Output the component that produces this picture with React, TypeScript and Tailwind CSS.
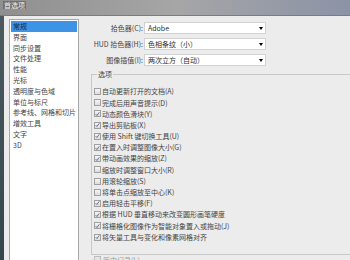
const CATEGORIES = [
  '常规',
  '界面',
  '同步设置',
  '文件处理',
  '性能',
  '光标',
  '透明度与色域',
  '单位与标尺',
  '参考线、网格和切片',
  '增效工具',
  '文字',
  '3D',
];

const PICKERS = [
  { label: '拾色器(C):', value: 'Adobe' },
  { label: 'HUD 拾色器(H):', value: '色相条纹（小）' },
  { label: '图像插值(I):', value: '两次立方（自动）' },
];

const OPTIONS: { text: string; checked: boolean }[] = [
  { text: '自动更新打开的文档(A)', checked: false },
  { text: '完成后用声音提示(D)', checked: false },
  { text: '动态颜色滑块(Y)', checked: true },
  { text: '导出剪贴板(X)', checked: true },
  { text: '使用 Shift 键切换工具(U)', checked: true },
  { text: '在置入时调整图像大小(G)', checked: true },
  { text: '带动画效果的缩放(Z)', checked: true },
  { text: '缩放时调整窗口大小(R)', checked: false },
  { text: '用滚轮缩放(S)', checked: false },
  { text: '将单击点缩放至中心(K)', checked: false },
  { text: '启用轻击平移(F)', checked: true },
  { text: '根据 HUD 垂直移动来改变圆形画笔硬度', checked: true },
  { text: '将栅格化图像作为智能对象置入或拖动(J)', checked: true },
  { text: '将矢量工具与变化和像素网格对齐', checked: true },
];

function Checkbox({ checked }: { checked: boolean }) {
  return (
    <span className="w-[7px] h-[7px] shrink-0 border border-[#a0a0a0] bg-gradient-to-b from-[#f6f6f6] to-[#dcdcdc] flex items-center justify-center">
      {checked && (
        <svg width="6" height="6" viewBox="0 0 6 6">
          <path d="M0.8 3.2 L2.3 4.8 L5.2 0.9" fill="none" stroke="#4a5a84" strokeWidth="1" />
        </svg>
      )}
    </span>
  );
}

export default function App() {
  return (
    <div className="w-[350px] h-[260px] overflow-hidden bg-[#ececec] flex flex-col font-['Noto_Sans_CJK_SC',sans-serif] text-[7px] text-[#444]">
      {/* Title bar */}
      <div className="h-[16px] shrink-0 border-b border-[#7c7c7c] bg-gradient-to-r from-[#8f8f8f] via-[#a6a6a6] to-[#8c93a6] flex items-start pl-[3px] pt-[1px]">
        <span className="px-[1px] leading-[8px] bg-[#707070] text-[#f2f2f2]">首选项</span>
      </div>

      <div className="flex flex-1 min-h-0">
        <div className="w-[4px] shrink-0 bg-gradient-to-b from-[#4c5a60] to-[#34474d]" />

        {/* Category list */}
        <div className="pl-[5px] pt-[3px] shrink-0">
          <div className="w-[70px] h-[260px] bg-white border border-[#a8a8a8] pt-[1px] px-[1px]">
            {CATEGORIES.map((name, i) => (
              <div
                key={name}
                className={`h-[10.8px] leading-[10.8px] pl-[2px] whitespace-nowrap ${
                  i === 0 ? 'bg-[#3d93e6] text-[#14254a]' : ''
                }`}
              >
                {name}
              </div>
            ))}
          </div>
        </div>

        {/* Right side */}
        <div className="ml-[11px] flex flex-col">
          <div className="pt-[6px] flex flex-col gap-[4px]">
            {PICKERS.map((p) => (
              <div key={p.label} className="flex items-center h-[12px]">
                <span className="w-[53px] text-right whitespace-nowrap">{p.label}</span>
                <div className="ml-[1px] w-[122px] h-[12px] bg-white border border-[#d2d2d2] flex items-center justify-between pl-[3px] pr-[2px] text-[#2c2c2c]">
                  <span className="whitespace-nowrap">{p.value}</span>
                  <span className="w-0 h-0 border-l-[2.5px] border-r-[2.5px] border-t-[3px] border-l-transparent border-r-transparent border-t-black" />
                </div>
              </div>
            ))}
          </div>

          <fieldset className="mt-[3px] ml-[1px] w-[275px] border border-r-0 border-[#c8c8c8] pl-[2px] pt-[7px] pb-[11px]">
            <legend className="ml-[3px] px-[1px] leading-[10px] text-[#444]">选项</legend>
            <div className="flex flex-col">
              {OPTIONS.map((o) => (
                <div key={o.text} className="h-[11.2px] flex items-center gap-[1px] whitespace-nowrap">
                  <Checkbox checked={o.checked} />
                  <span>{o.text}</span>
                </div>
              ))}
            </div>
          </fieldset>

          <div className="mt-[1px] ml-[4px] h-[10px] flex items-center gap-[2px] text-[#9a9a9a]">
            <span className="w-[7px] h-[7px] border border-[#bdbdbd] bg-[#e6e6e6]" />
            <span className="leading-[8px]">历史记录(L)</span>
          </div>
        </div>
      </div>
    </div>
  );
}
